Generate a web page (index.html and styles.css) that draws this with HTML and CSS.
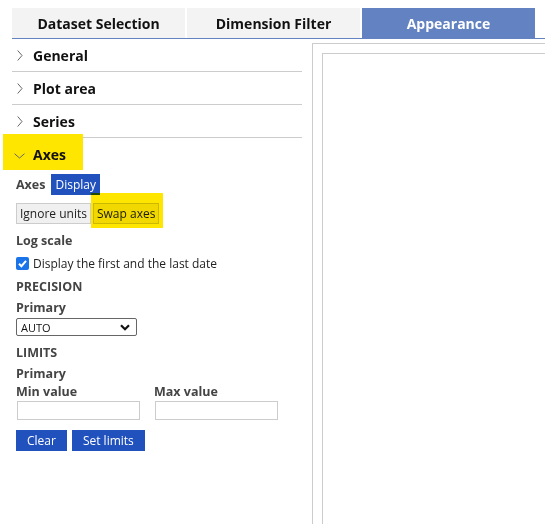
FILE: index.html
```html
<!DOCTYPE html>
<html>
<head>
<meta charset="utf-8">
<link rel="stylesheet" href="styles.css">
</head>
<body>
<div class="tabs">
  <div class="tab">Dataset Selection</div>
  <div class="tab">Dimension Filter</div>
  <div class="tab active">Appearance</div>
</div>
<div class="main">
  <div class="panel">
    <div class="acc-head">
      <svg class="chev" width="6" height="11" viewBox="0 0 6 11"><path d="M0.7 0.5 L5 5.5 L0.7 10.5" fill="none" stroke="#666" stroke-width="1"/></svg>
      <span class="acc-title">General</span>
    </div>
    <div class="acc-head">
      <svg class="chev" width="6" height="11" viewBox="0 0 6 11"><path d="M0.7 0.5 L5 5.5 L0.7 10.5" fill="none" stroke="#666" stroke-width="1"/></svg>
      <span class="acc-title">Plot area</span>
    </div>
    <div class="acc-head">
      <svg class="chev" width="6" height="11" viewBox="0 0 6 11"><path d="M0.7 0.5 L5 5.5 L0.7 10.5" fill="none" stroke="#666" stroke-width="1"/></svg>
      <span class="acc-title">Series</span>
    </div>
    <div class="acc-head open">
      <span class="hl hl-axes"></span>
      <svg class="chev-down" width="11" height="6" viewBox="0 0 11 6"><path d="M0.5 0.7 L5.5 5 L10.5 0.7" fill="none" stroke="#666" stroke-width="1"/></svg>
      <span class="acc-title">Axes</span>
    </div>
    <div class="acc-body">
      <div class="row axes-row">
        <span class="lbl">Axes</span>
        <span class="btn blue">Display</span>
      </div>
      <div class="row btn-row">
        <span class="btn grey">Ignore units</span>
        <span class="btn grey swap">Swap axes<span class="hl hl-swap"></span></span>
      </div>
      <div class="lbl log">Log scale</div>
      <label class="check">
        <svg class="cb" width="13" height="13" viewBox="0 0 13 13"><rect x="0" y="0" width="13" height="13" rx="2" fill="#1a73e8"/><path d="M3 6.8 L5.4 9.2 L10 3.8" fill="none" stroke="#fff" stroke-width="2"/></svg>
        <span>Display the first and the last date</span>
      </label>
      <div class="lbl sec">PRECISION</div>
      <div class="lbl sub">Primary</div>
      <div class="select"><span>AUTO</span>
        <svg width="10" height="7" viewBox="0 0 10 7"><path d="M1 1.2 L5 5.2 L9 1.2" fill="none" stroke="#111" stroke-width="2.2"/></svg>
      </div>
      <div class="lbl sec limits">LIMITS</div>
      <div class="lbl sub">Primary</div>
      <div class="limit-grid">
        <div class="field"><div class="lbl">Min value</div><div class="input"></div></div>
        <div class="field"><div class="lbl">Max value</div><div class="input"></div></div>
      </div>
      <div class="row act-row">
        <span class="btn blue act">Clear</span>
        <span class="btn blue act">Set limits</span>
      </div>
    </div>
  </div>
  <div class="chart">
    <div class="chart-inner"></div>
  </div>
</div>
</body>
</html>
```
FILE: styles.css
```css
html, body {
  margin: 0;
  padding: 0;
  background: #fff;
  overflow: hidden;
  width: 545px;
  height: 524px;
}
body {
  font-family: "Open Sans", "Noto Sans", sans-serif;
  color: #222;
}
.tabs {
  display: flex;
  gap: 2px;
  margin: 8px 0 0 12px;
  border-bottom: 1px solid #6282c2;
  height: 30px;
}
.tab {
  width: 173px;
  flex: none;
  background: #f3f3f3;
  display: flex;
  align-items: center;
  justify-content: center;
  font-weight: 700;
  font-size: 14px;
  color: #111;
}
.tab.active {
  background: #6282c2;
  color: #fff;
}
.main {
  display: flex;
  gap: 10px;
  margin-left: 12px;
}
.panel {
  width: 290px;
  flex: none;
}
.acc-head {
  position: relative;
  height: 32px;
  border-bottom: 1px solid #ccc;
  display: flex;
  align-items: center;
  font-weight: 700;
  font-size: 14px;
  color: #111;
}
.acc-head.open {
  border-bottom: none;
  height: 33px;
}
.chev {
  margin: 0 10px 0 5px;
}
.chev-down {
  position: relative;
  z-index: 1;
  margin: 2px 8px 0 2px;
}
.acc-title {
  position: relative;
  z-index: 1;
}
.hl {
  position: absolute;
  background: #ffe600;
}
.hl-axes {
  left: -9px;
  top: -4px;
  width: 80px;
  height: 36px;
  z-index: 0;
}
.acc-body {
  padding-left: 4px;
  font-size: 12px;
}
.row {
  display: flex;
  align-items: center;
}
.lbl {
  font-weight: 700;
  color: #444;
  font-size: 12.5px;
}
.axes-row {
  height: 21px;
  margin-top: 3px;
  gap: 6px;
}
.btn {
  display: inline-flex;
  align-items: center;
  height: 21px;
  box-sizing: border-box;
  padding: 0 4px;
  font-size: 12px;
}
.blue {
  background: #2051bd;
  color: #fff;
}
.grey {
  background: #f0f0f0;
  border: 1px solid #ccc;
  color: #222;
  padding: 0 3px;
}
.btn-row {
  margin-top: 8px;
  gap: 2px;
}
.swap {
  position: relative;
}
.hl-swap {
  left: -3px;
  top: -11px;
  right: -5px;
  bottom: -5px;
  mix-blend-mode: multiply;
}
.log {
  margin-top: 8px;
  line-height: 18px;
}
.check {
  display: flex;
  align-items: center;
  gap: 4px;
  margin-top: 4px;
  height: 18px;
  font-size: 12px;
  color: #222;
}
.sec {
  margin-top: 6px;
  line-height: 18px;
}
.sub {
  margin-top: 3px;
  line-height: 18px;
}
.select {
  width: 121px;
  height: 18px;
  margin-top: 1px;
  box-sizing: border-box;
  border: 1px solid #666;
  border-radius: 2px;
  display: flex;
  align-items: center;
  justify-content: space-between;
  padding: 0 6px 0 4px;
  font-size: 11px;
  color: #111;
}
.limits {
  margin-top: 8px;
}
.limit-grid {
  display: flex;
  gap: 14px;
}
.field .lbl {
  line-height: 18px;
}
.input {
  width: 123px;
  height: 19px;
  box-sizing: border-box;
  border: 1px solid #ccc;
  margin-left: 1px;
}
.act-row {
  margin-top: 10px;
  gap: 5px;
}
.act {
  height: 21px;
  padding: 0 11px;
}
.chart {
  flex: none;
  width: 233px;
  height: 481px;
  margin-top: 4px;
  border: 1px solid #ccc;
  border-right: none;
  border-bottom: none;
  box-sizing: border-box;
  padding: 9px 0 0 9px;
}
.chart-inner {
  height: 100%;
  border: 1px solid #ccc;
  border-right: none;
  border-bottom: none;
}
```
